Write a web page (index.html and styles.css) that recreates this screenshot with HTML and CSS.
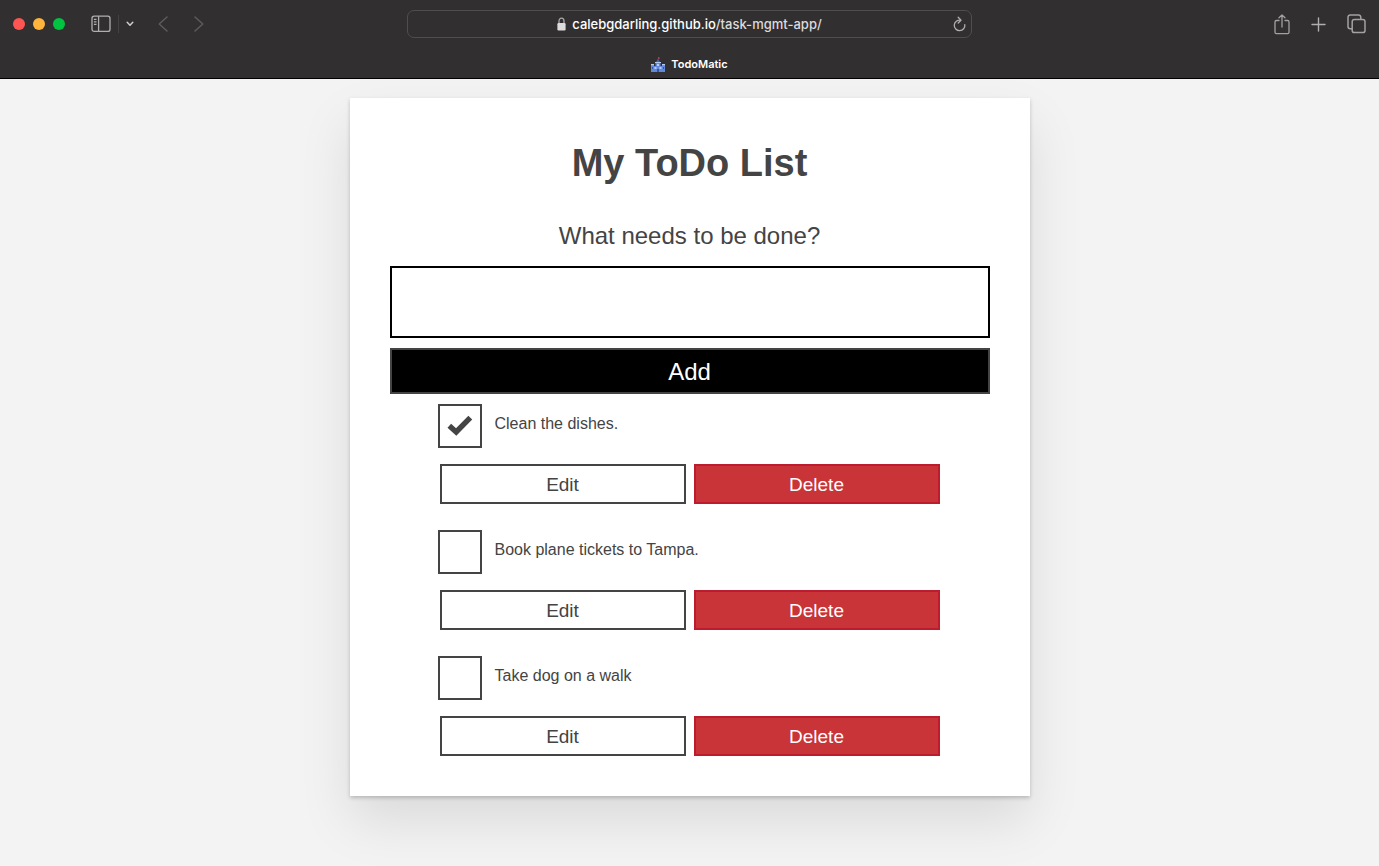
FILE: index.html
```html
<!DOCTYPE html>
<html lang="en">
<head>
<meta charset="utf-8">
<title>TodoMatic</title>
<link rel="stylesheet" href="styles.css">
</head>
<body>
<header class="browser">
  <div class="toolbar">
    <div class="toolbar-left">
      <div class="lights">
        <button class="light light-close" aria-label="Close"></button>
        <button class="light light-min" aria-label="Minimize"></button>
        <button class="light light-max" aria-label="Full screen"></button>
      </div>
      <button class="icon-btn" aria-label="Sidebar">
        <svg width="20" height="18" viewBox="0 0 20 18" fill="none" stroke="#b0aeaf" stroke-width="1.3"><rect x="1" y="1.2" width="18" height="15.2" rx="2.2"/><path d="M7.6 1.2v15.2M2.9 4.4h2.6M2.9 6.9h2.6M2.9 9.4h2.6"/></svg>
      </button>
      <span class="divider"></span>
      <button class="icon-btn" aria-label="Tab groups">
        <svg width="8" height="6" viewBox="0 0 8 6" fill="none" stroke="#cfcdce" stroke-width="1.5" stroke-linecap="round" stroke-linejoin="round"><path d="M1.2 1.3L4 4.2l2.8-2.9"/></svg>
      </button>
      <div class="history">
        <button class="icon-btn" aria-label="Back">
          <svg width="10" height="16" viewBox="0 0 10 16" fill="none" stroke="#5d5b5c" stroke-width="1.5" stroke-linecap="round" stroke-linejoin="round"><path d="M9 1L1.2 8 9 15"/></svg>
        </button>
        <button class="icon-btn" aria-label="Forward">
          <svg width="10" height="16" viewBox="0 0 10 16" fill="none" stroke="#5d5b5c" stroke-width="1.5" stroke-linecap="round" stroke-linejoin="round"><path d="M1 1l7.8 7L1 15"/></svg>
        </button>
      </div>
    </div>
    <div class="address">
      <a class="url" href="#"><svg width="9" height="14" viewBox="0 0 9 14"><path d="M2 7V4C2 .2 7 .2 7 4v3" fill="none" stroke="#aaa8a9" stroke-width="1.3"/><rect x="0.4" y="6" width="8.2" height="7.4" rx="1.2" fill="#dddbdc"/></svg><span>calebgdarling.github.io<span class="path">/task-mgmt-app/</span></span></a>
      <button class="icon-btn reload" aria-label="Reload">
        <svg width="13" height="16" viewBox="0 0 13 16" fill="none" stroke="#b0aeaf" stroke-width="1.3" stroke-linecap="round" stroke-linejoin="round"><path d="M11.800 8.600A5.300 5.300 0 1 1 7.600 4.200M5.200 1.300l2.800 2.900-2.800 2.800"/></svg>
      </button>
    </div>
    <div class="toolbar-right">
      <button class="icon-btn" aria-label="Share">
        <svg width="16" height="21" viewBox="0 0 16 21" fill="none" stroke="#a3a1a2" stroke-width="1.3" stroke-linecap="round" stroke-linejoin="round"><path d="M5 6.500H2.400A1.400 1.400 0 0 0 1 7.900v10.400a1.400 1.400 0 0 0 1.400 1.400h11.200a1.400 1.400 0 0 0 1.400-1.400V7.900a1.400 1.400 0 0 0-1.400-1.400H11M8 13V1M5 3.700L8 .9l3 2.800"/></svg>
      </button>
      <button class="icon-btn" aria-label="New tab">
        <svg width="15" height="15" viewBox="0 0 15 15" fill="none" stroke="#b0aeaf" stroke-width="1.4" stroke-linecap="round"><path d="M7.500 1v13M1 7.500h13"/></svg>
      </button>
      <button class="icon-btn" aria-label="Tab overview">
        <svg width="19" height="20" viewBox="0 0 19 20" fill="none" stroke="#a3a1a2" stroke-width="1.5"><rect x="5.200" y="5.600" width="12.800" height="13" rx="2.200"/><path d="M5.200 14.700H3.200A2.200 2.200 0 0 1 1 12.500V3.200A2.200 2.200 0 0 1 3.200 1h8.400a2.200 2.200 0 0 1 2.200 2.200v2.400"/></svg>
      </button>
    </div>
  </div>
  <div class="tab">
    <svg width="14" height="15" viewBox="0 0 14 15"><path d="M7 0h1.500v2H7z" fill="#a5435b"/><path d="M4.500 6L7 1.500 9.500 6z" fill="#49669f"/><path d="M0 7.500h3V9h1.500V5h5v4H11V7.500h3V15H0z" fill="#6288dc"/><path d="M0 7h3v1.200H0zM11 7h3v1.200h-3zM4 5h6v1H4z" fill="#b5c8ef"/><path d="M3.500 10h2v2h-2zM8.500 10h2v2h-2zM6 7h2v2H6z" fill="#b9cbf2"/><path d="M6 12h2v3H6zM1 10h1v2H1zM12 10h1v2h-1z" fill="#3456a4"/></svg>
    <span>TodoMatic</span>
  </div>
</header>
<main class="card">
  <h1>My ToDo List</h1>
  <form class="new-task">
    <label for="new-todo">What needs to be done?</label>
    <input type="text" id="new-todo" autocomplete="off">
    <button type="button" class="add">Add</button>
  </form>
  <ul class="tasks">
    <li class="task">
      <div class="task-row">
        <span class="check"><input type="checkbox" id="todo-0" checked><svg width="26" height="22" viewBox="0 0 26 22" fill="none" stroke="#444" stroke-width="5.400"><path d="M2.300 10.800l6.900 6.200L23.300 2.700"/></svg></span>
        <label for="todo-0">Clean the dishes.</label>
      </div>
      <div class="actions"><button class="btn">Edit</button><button class="btn btn-danger">Delete</button></div>
    </li>
    <li class="task">
      <div class="task-row">
        <span class="check"><input type="checkbox" id="todo-1"></span>
        <label for="todo-1">Book plane tickets to Tampa.</label>
      </div>
      <div class="actions"><button class="btn">Edit</button><button class="btn btn-danger">Delete</button></div>
    </li>
    <li class="task">
      <div class="task-row">
        <span class="check"><input type="checkbox" id="todo-2"></span>
        <label for="todo-2">Take dog on a walk</label>
      </div>
      <div class="actions"><button class="btn">Edit</button><button class="btn btn-danger">Delete</button></div>
    </li>
  </ul>
</main>
</body>
</html>
```
FILE: styles.css
```css
*, *::before, *::after { box-sizing: border-box; }

body {
  margin: 0;
  min-height: 100vh;
  background: #f3f3f3;
  color: #444;
  font: 16px/20px "Liberation Sans", Arial, sans-serif;
}

button, input { font: inherit; color: inherit; }
svg { display: block; flex: none; }

.browser {
  background: #322f30;
  border-bottom: 1px solid #000;
  font-family: Inter, sans-serif;
  color: #fff;
}

.toolbar {
  display: grid;
  grid-template-columns: 1fr 41% 1fr;
  align-items: center;
  height: 48px;
}

.toolbar-left, .toolbar-right, .lights, .history, .tab, .url {
  display: flex;
  align-items: center;
}

.toolbar-left { padding-left: 13px; }
.toolbar-right { justify-content: flex-end; gap: 21px; padding-right: 13px; }
.lights { gap: 8px; margin-right: 26px; }

.light {
  width: 12px;
  height: 12px;
  padding: 0;
  border: 0;
  border-radius: 50%;
}

.light-close { background: #ff5552; }
.light-min { background: #ffb43c; }
.light-max { background: #00c441; }

.icon-btn {
  padding: 0;
  border: 0;
  background: none;
}

.divider {
  width: 1px;
  height: 18px;
  margin: 0 7px;
  background: #454243;
}

.history { gap: 26px; margin-left: 24px; }

.address {
  display: flex;
  align-items: center;
  justify-content: center;
  position: relative;
  height: 28px;
  border: 1px solid #504d4e;
  border-radius: 7px;
}

.url {
  gap: 6px;
  color: #fff;
  font-size: 13px;
  font-weight: 500;
  text-decoration: none;
}

.path { color: #dddbdc; }
.reload { position: absolute; right: 5px; }

.tab {
  justify-content: center;
  gap: 6px;
  height: 30px;
  padding-top: 2px;
  font-size: 11px;
  font-weight: 600;
}

.card {
  width: calc(100% - 32px);
  max-width: 680px;
  margin: 19px auto 40px;
  padding: 40px;
  background: #fff;
  box-shadow: 0 2px 4px rgba(0, 0, 0, .2), 0 25px 50px rgba(0, 0, 0, .1);
}

h1 {
  margin: 0 0 32px;
  font-size: 38px;
  line-height: 50px;
  text-align: center;
}

.new-task {
  display: flex;
  flex-direction: column;
  gap: 10px;
}

.new-task label {
  margin-bottom: 5px;
  font-size: 24px;
  line-height: 31px;
  text-align: center;
}

.new-task input {
  width: 100%;
  height: 72px;
  padding: 8px 16px;
  border: 2px solid #000;
  border-radius: 0;
  font-size: 24px;
}

.add {
  height: 46px;
  padding: 2px 6px 0;
  border: 2px solid #444;
  background: #000;
  color: #fff;
  font-size: 24px;
}

.tasks {
  display: grid;
  gap: 26px;
  margin: 10px 48px 0;
  padding: 0;
  list-style: none;
}

.task-row {
  display: flex;
  gap: 13px;
}

.task-row label { padding-top: 10px; }

.check {
  display: grid;
  place-items: center;
}

.check > * { grid-area: 1 / 1; }
.check svg { pointer-events: none; }

.check input {
  appearance: none;
  width: 44px;
  height: 44px;
  margin: 0;
  border: 2px solid #444;
}

.actions {
  display: flex;
  gap: 8px;
  margin-top: 16px;
  padding: 0 2px;
}

.btn {
  flex: 1;
  height: 40px;
  padding: 2px 6px 0;
  border: 2px solid #444;
  background: #fff;
  font-size: 19px;
}

.btn-danger {
  border-color: #bc1c2e;
  background: #c93439;
  color: #fff;
}
```
